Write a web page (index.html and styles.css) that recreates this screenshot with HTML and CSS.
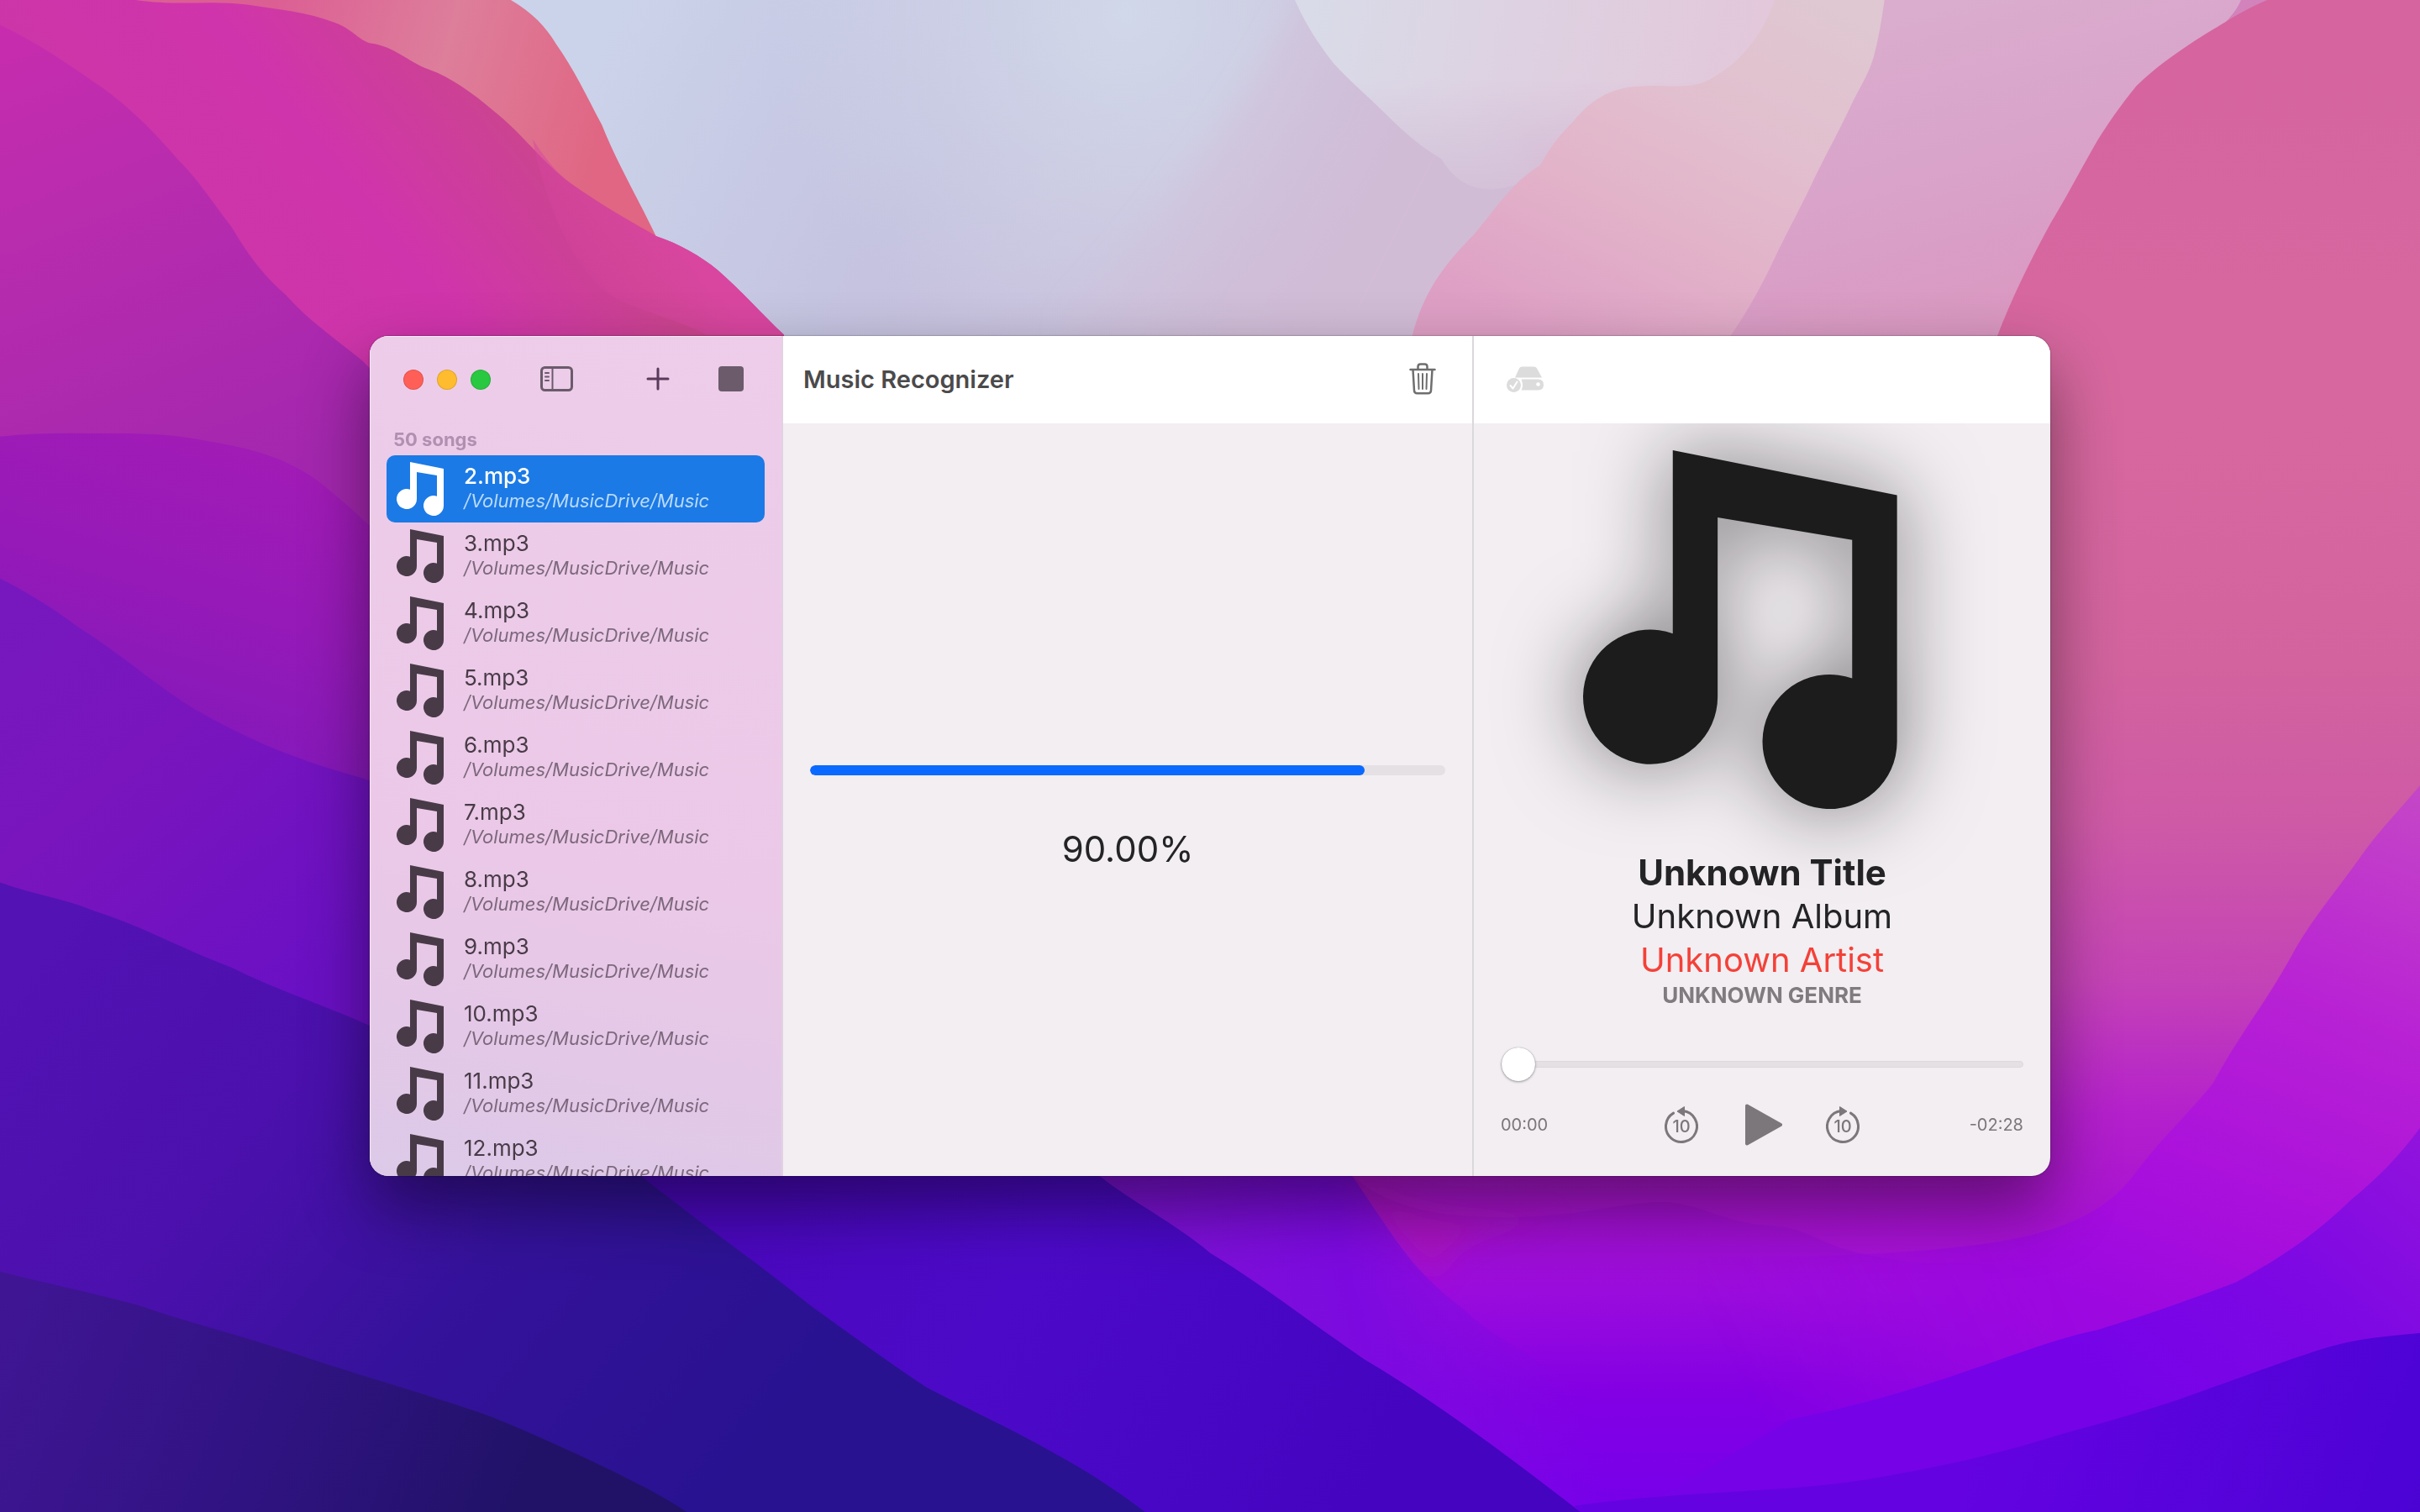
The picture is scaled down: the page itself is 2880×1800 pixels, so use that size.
FILE: index.html
```html
<!DOCTYPE html>
<html lang="en">
<head>
<meta charset="utf-8">
<title>Music Recognizer</title>
<link rel="stylesheet" href="styles.css">
</head>
<body>
<svg class="wallpaper" viewBox="0 0 1568 980" preserveAspectRatio="xMidYMid slice" aria-hidden="true">
  <defs>
    <linearGradient id="sky" gradientUnits="userSpaceOnUse" x1="400" y1="0" x2="900" y2="260"><stop offset="0" stop-color="#cbd3ea"/><stop offset=".4" stop-color="#c5c3e0"/><stop offset=".7" stop-color="#cbc0dc"/><stop offset="1" stop-color="#d0b4d2"/></linearGradient>
    <radialGradient id="skyglow" gradientUnits="userSpaceOnUse" cx="730" cy="10" r="230"><stop offset="0" stop-color="#d1d8e9"/><stop offset="1" stop-color="#d1d8e9" stop-opacity="0"/></radialGradient>
    <linearGradient id="blush" gradientUnits="userSpaceOnUse" x1="740" y1="60" x2="900" y2="140"><stop offset="0" stop-color="#d1bcd6" stop-opacity="0"/><stop offset="1" stop-color="#d1bcd6"/></linearGradient>
    <linearGradient id="pale" gradientUnits="userSpaceOnUse" x1="850" y1="0" x2="1130" y2="60"><stop offset="0" stop-color="#d9dbe8"/><stop offset=".5" stop-color="#ded1e1"/><stop offset="1" stop-color="#e2c8da"/></linearGradient>
    <linearGradient id="paleFade" gradientUnits="userSpaceOnUse" x1="0" y1="50" x2="0" y2="128"><stop offset="0" stop-color="#fff"/><stop offset="1" stop-color="#333"/></linearGradient>
    <mask id="paleMask"><rect width="1568" height="980" fill="url(#paleFade)"/></mask>
    <linearGradient id="peach" gradientUnits="userSpaceOnUse" x1="1180" y1="0" x2="1060" y2="250"><stop offset="0" stop-color="#dfc8d2"/><stop offset=".35" stop-color="#e2bfce"/><stop offset=".65" stop-color="#e2b2c9"/><stop offset="1" stop-color="#de9fc5"/></linearGradient>
    <linearGradient id="lilac" gradientUnits="userSpaceOnUse" x1="1230" y1="0" x2="1290" y2="220"><stop offset="0" stop-color="#daadce"/><stop offset=".5" stop-color="#d9a3ca"/><stop offset="1" stop-color="#da97c0"/></linearGradient>
    <linearGradient id="rose" gradientUnits="userSpaceOnUse" x1="0" y1="0" x2="0" y2="860"><stop offset="0" stop-color="#d5649f"/><stop offset=".3" stop-color="#d7689f"/><stop offset=".5" stop-color="#d2639e"/><stop offset=".62" stop-color="#ce5aa6"/><stop offset=".74" stop-color="#c443b6"/><stop offset=".84" stop-color="#b420cc"/><stop offset=".92" stop-color="#a812d2"/><stop offset="1" stop-color="#a010da"/></linearGradient>
    <linearGradient id="orchid" gradientUnits="userSpaceOnUse" x1="1568" y1="510" x2="1430" y2="870"><stop offset="0" stop-color="#c547c6"/><stop offset=".4" stop-color="#b822d4"/><stop offset=".75" stop-color="#aa10dc"/><stop offset="1" stop-color="#9c08e0"/></linearGradient>
    <linearGradient id="orchidFade" gradientUnits="userSpaceOnUse" x1="1130" y1="900" x2="1330" y2="800"><stop offset="0" stop-color="#000"/><stop offset="1" stop-color="#fff"/></linearGradient>
    <mask id="orchidMask"><rect width="1568" height="980" fill="url(#orchidFade)"/></mask>
    <linearGradient id="plum" gradientUnits="userSpaceOnUse" x1="0" y1="760" x2="0" y2="980"><stop offset="0" stop-color="#a512c8"/><stop offset=".35" stop-color="#9a0cdc"/><stop offset=".65" stop-color="#8300e4"/><stop offset="1" stop-color="#7600ea"/></linearGradient>
    <linearGradient id="plumSide" gradientUnits="userSpaceOnUse" x1="750" y1="860" x2="1000" y2="800"><stop offset="0" stop-color="#7d12d6"/><stop offset=".5" stop-color="#7c0ae0"/><stop offset="1" stop-color="#7c0ae0" stop-opacity="0"/></linearGradient>
    <linearGradient id="violetR" gradientUnits="userSpaceOnUse" x1="1568" y1="730" x2="1400" y2="930"><stop offset="0" stop-color="#9213dc"/><stop offset=".5" stop-color="#7d08e4"/><stop offset="1" stop-color="#7602e8"/></linearGradient>
    <linearGradient id="indigoR" gradientUnits="userSpaceOnUse" x1="1568" y1="980" x2="1300" y2="880"><stop offset="0" stop-color="#4b03d4"/><stop offset="1" stop-color="#6402e2"/></linearGradient>
    <linearGradient id="cobalt" gradientUnits="userSpaceOnUse" x1="500" y1="760" x2="880" y2="980"><stop offset="0" stop-color="#4a08be"/><stop offset=".4" stop-color="#4c0ac8"/><stop offset="1" stop-color="#4404c0"/></linearGradient>
    <linearGradient id="coral" gradientUnits="userSpaceOnUse" x1="180" y1="0" x2="400" y2="60"><stop offset="0" stop-color="#dc5f94"/><stop offset=".5" stop-color="#dd7e9b"/><stop offset="1" stop-color="#e06683"/></linearGradient>
    <linearGradient id="magenta" gradientUnits="userSpaceOnUse" x1="100" y1="240" x2="330" y2="60"><stop offset="0" stop-color="#ca36a6"/><stop offset=".6" stop-color="#d034ac"/><stop offset="1" stop-color="#cb458e"/></linearGradient>
    <linearGradient id="pinkTip" gradientUnits="userSpaceOnUse" x1="370" y1="200" x2="440" y2="150"><stop offset="0" stop-color="#d545a0" stop-opacity="0"/><stop offset="1" stop-color="#d946a0"/></linearGradient>
    <linearGradient id="fuchsia" gradientUnits="userSpaceOnUse" x1="0" y1="20" x2="120" y2="330"><stop offset="0" stop-color="#c72cae"/><stop offset=".4" stop-color="#b82cae"/><stop offset="1" stop-color="#a327ae"/></linearGradient>
    <linearGradient id="purple" gradientUnits="userSpaceOnUse" x1="150" y1="280" x2="90" y2="480"><stop offset="0" stop-color="#a21bb6"/><stop offset=".5" stop-color="#961ab8"/><stop offset="1" stop-color="#8418ba"/></linearGradient>
    <linearGradient id="grape" gradientUnits="userSpaceOnUse" x1="0" y1="400" x2="200" y2="640"><stop offset="0" stop-color="#7618be"/><stop offset=".4" stop-color="#7a15bd"/><stop offset="1" stop-color="#6a10c4"/></linearGradient>
    <linearGradient id="indigo" gradientUnits="userSpaceOnUse" x1="40" y1="600" x2="480" y2="960"><stop offset="0" stop-color="#5312b4"/><stop offset=".35" stop-color="#4a10ac"/><stop offset=".62" stop-color="#34129a"/><stop offset="1" stop-color="#281290"/></linearGradient>
    <linearGradient id="night" gradientUnits="userSpaceOnUse" x1="0" y1="840" x2="330" y2="980"><stop offset="0" stop-color="#401594"/><stop offset=".5" stop-color="#311384"/><stop offset="1" stop-color="#211268"/></linearGradient>
    <filter id="soft" x="-20%" y="-20%" width="140%" height="140%"><feGaussianBlur stdDeviation="8"/></filter>
  </defs>
  <rect width="1568" height="980" fill="url(#sky)"/>
  <rect width="1568" height="400" fill="url(#skyglow)"/>
  <path fill="url(#blush)" filter="url(#soft)" d="M850 -20C800 80 740 150 690 200L690 300H1000V120L900 -20Z"/>
  <path fill="url(#pale)" mask="url(#paleMask)" d="M839 0C846 16 854 28 864 41C876 54 888 64 899 75C912 88 922 96 934 103C944 120 960 128 984 119L1200 119V0Z"/>
  <path fill="url(#lilac)" d="M1200 0H1500L1330 300H1090Z"/>
  <path fill="url(#peach)" d="M915 218C922 190 935 172 955 152C970 134 980 118 998 107C1004 96 1010 88 1020 78C1030 66 1042 57 1062 56C1080 54 1096 60 1112 49C1130 38 1142 22 1150 0H1221C1219 14 1217 26 1214 37C1210 50 1204 58 1199 69C1190 88 1182 102 1174 119C1165 138 1157 152 1149 169C1140 188 1132 202 1121 218V300H890Z"/>
  <path fill="#cf74b4" opacity=".7" d="M1452 0C1446 16 1420 32 1402 50L1486 0Z"/>
  <path fill="url(#rose)" d="M1469 0C1450 8 1440 16 1429 22C1410 34 1396 44 1384 56C1374 68 1366 80 1359 91C1348 110 1340 126 1329 144C1316 168 1304 192 1294 218L1200 500L800 700V860H1568V0Z"/>
  <path fill="url(#plum)" d="M690 740V800L884 900L1010 980H1568V820H1300L1264 818C1240 820 1225 816 1204 812C1180 806 1168 796 1154 795C1146 794 1138 794 1129 792C1112 788 1096 780 1079 779C1055 779 1030 786 1009 787C985 790 965 789 949 788C915 786 890 775 876 762V740Z"/>
  <path fill="#b018b4" opacity=".55" filter="url(#soft)" d="M876 762C890 790 915 810 930 830C945 790 980 800 1010 787C990 790 965 789 949 788C920 786 890 775 876 762Z"/>
  <path fill="url(#plumSide)" d="M690 740H876V762L899 796C915 820 930 835 949 849C980 880 1040 890 1080 980H1010L884 900L690 800Z"/>
  <g mask="url(#orchidMask)"><path fill="url(#orchid)" d="M1568 509C1552 528 1540 540 1529 556C1512 580 1496 598 1484 621C1468 650 1450 672 1434 702C1418 722 1398 740 1380 765C1350 800 1300 815 1100 815V930C1290 900 1360 890 1400 860L1568 760Z"/></g>
  <path fill="url(#violetR)" d="M1568 731C1554 750 1540 764 1524 777C1500 800 1480 814 1449 831C1420 842 1392 852 1359 862C1310 872 1260 900 1160 920L1060 980H1568Z"/>
  <path fill="url(#indigoR)" d="M1568 864C1548 866 1530 867 1509 873C1480 882 1460 890 1434 899C1400 912 1370 920 1334 930C1290 944 1250 952 1209 959C1150 968 1090 966 1020 976L1024 980H1568Z"/>
  <path fill="url(#cobalt)" d="M400 700H620L712 762C735 780 760 792 784 812C820 834 850 858 884 881C930 908 980 946 1024 980H400Z"/>
  <path fill="url(#coral)" d="M80 0H331C345 8 354 18 360 28C372 45 380 62 390 81C400 106 412 126 425 153L400 220H80Z"/>
  <path fill="url(#magenta)" d="M0 0H88C115 4 135 0 160 3C180 6 200 8 215 14C228 18 232 26 240 28C256 30 264 40 278 45C292 50 306 60 320 72C340 88 350 104 370 119C388 132 406 142 425 153C440 158 454 166 465 175C480 188 494 204 508 217V400H0Z"/>
  <path fill="url(#pinkTip)" d="M345 90C355 105 360 111 370 119C388 132 406 142 425 153C440 158 454 166 465 175C480 188 494 204 508 217H458C440 208 420 203 400 194C375 180 355 140 345 90Z"/>
  <path fill="url(#fuchsia)" d="M0 16C25 28 45 42 65 56C85 70 100 86 115 103C130 118 138 132 150 147C160 164 170 178 185 191C200 208 218 220 235 234L300 300V420H0Z"/>
  <path fill="url(#purple)" d="M0 283C25 280 50 281 75 281C98 281 115 282 135 286C158 290 174 294 190 302C202 308 208 313 215 319C226 328 232 334 240 341L300 380V600H0Z"/>
  <path fill="url(#grape)" d="M0 375C18 384 34 394 50 406C76 422 98 442 125 459C148 472 168 482 190 490C208 497 224 501 240 506L340 560V760H0Z"/>
  <path fill="url(#indigo)" d="M0 572C22 580 40 582 60 590C92 600 120 616 150 627C180 642 212 652 240 665L415 762C450 790 490 818 525 846C550 864 574 882 600 899C628 914 656 926 685 943C706 954 726 968 742 980H0Z"/>
  <path fill="url(#night)" d="M0 824C30 832 60 838 90 846C124 858 158 866 190 877C228 890 264 900 300 912C326 920 350 932 375 943C398 954 424 966 445 980H0Z"/>
</svg>

<svg class="sprite" aria-hidden="true">
  <symbol id="note" viewBox="0 0 64 64"><path fill="currentColor" d="M16 0L56 8V52A12 12 0 1 1 48 40.700V16L24 12V44A12 12 0 1 1 16 32.700Z"/></symbol>
</svg>

<main class="window">
  <aside class="sidebar">
    <header class="toolbar sidebar-toolbar">
      <div class="lights">
        <button class="light close" aria-label="Close"></button>
        <button class="light minimize" aria-label="Minimize"></button>
        <button class="light zoom" aria-label="Zoom"></button>
      </div>
      <button class="tool raised toggle" aria-label="Toggle sidebar">
        <svg width="40" height="32" viewBox="0 0 40 32" fill="none" stroke="currentColor"><rect x="1.500" y="2.500" width="36" height="27" rx="4" stroke-width="3"/><path stroke-width="2" d="M14.500 3V29"/><path stroke-width="2" stroke-linecap="round" d="M6 9H10M6 13.500H10M6 18H10"/></svg>
      </button>
      <button class="tool raised add" aria-label="Add songs">
        <svg width="28" height="28" viewBox="0 0 28 28" stroke="currentColor" stroke-width="3" stroke-linecap="round"><path d="M14 2V26M2 14H26"/></svg>
      </button>
      <button class="tool raised" aria-label="Stop">
        <svg width="30" height="30" viewBox="0 0 30 30" fill="currentColor"><rect width="30" height="30" rx="4"/></svg>
      </button>
    </header>
    <h2 class="count">50 songs</h2>
    <ul class="songs">
      <li><button class="song selected"><svg class="song-icon"><use href="#note"/></svg><span class="song-text"><span class="name">2.mp3</span><span class="path">/Volumes/MusicDrive/Music</span></span></button></li>
      <li><button class="song"><svg class="song-icon"><use href="#note"/></svg><span class="song-text"><span class="name">3.mp3</span><span class="path">/Volumes/MusicDrive/Music</span></span></button></li>
      <li><button class="song"><svg class="song-icon"><use href="#note"/></svg><span class="song-text"><span class="name">4.mp3</span><span class="path">/Volumes/MusicDrive/Music</span></span></button></li>
      <li><button class="song"><svg class="song-icon"><use href="#note"/></svg><span class="song-text"><span class="name">5.mp3</span><span class="path">/Volumes/MusicDrive/Music</span></span></button></li>
      <li><button class="song"><svg class="song-icon"><use href="#note"/></svg><span class="song-text"><span class="name">6.mp3</span><span class="path">/Volumes/MusicDrive/Music</span></span></button></li>
      <li><button class="song"><svg class="song-icon"><use href="#note"/></svg><span class="song-text"><span class="name">7.mp3</span><span class="path">/Volumes/MusicDrive/Music</span></span></button></li>
      <li><button class="song"><svg class="song-icon"><use href="#note"/></svg><span class="song-text"><span class="name">8.mp3</span><span class="path">/Volumes/MusicDrive/Music</span></span></button></li>
      <li><button class="song"><svg class="song-icon"><use href="#note"/></svg><span class="song-text"><span class="name">9.mp3</span><span class="path">/Volumes/MusicDrive/Music</span></span></button></li>
      <li><button class="song"><svg class="song-icon"><use href="#note"/></svg><span class="song-text"><span class="name">10.mp3</span><span class="path">/Volumes/MusicDrive/Music</span></span></button></li>
      <li><button class="song"><svg class="song-icon"><use href="#note"/></svg><span class="song-text"><span class="name">11.mp3</span><span class="path">/Volumes/MusicDrive/Music</span></span></button></li>
      <li><button class="song"><svg class="song-icon"><use href="#note"/></svg><span class="song-text"><span class="name">12.mp3</span><span class="path">/Volumes/MusicDrive/Music</span></span></button></li>
    </ul>
  </aside>

  <section class="pane">
    <header class="toolbar main-toolbar">
      <h1 class="app-title">Music Recognizer</h1>
      <button class="tool raised trash" aria-label="Delete">
        <svg width="32" height="38" viewBox="0 0 32 38" fill="none" stroke="currentColor" stroke-linecap="round" stroke-linejoin="round"><path stroke-width="2.500" d="M1.500 8H30.500M10.500 8V4.500Q10.500 1.500 13.500 1.500H18.500Q21.500 1.500 21.500 4.500V8M4.500 8L6 33Q6.200 36.300 9.500 36.300H22.500Q25.800 36.300 26 33L27.500 8"/><path stroke-width="2" d="M11 13L11.500 31M16 13V31M21 13L20.500 31"/></svg>
      </button>
    </header>
    <div class="recognition">
      <progress class="bar" value="87.300" max="100" aria-labelledby="percent"></progress>
      <p class="percent" id="percent">90.00%</p>
    </div>
  </section>

  <section class="pane player-pane">
    <header class="toolbar player-toolbar">
      <button class="tool drive" aria-label="Save to drive" disabled>
        <svg width="44" height="32" viewBox="0 0 44 32"><path fill="currentColor" d="M15 2.500Q16 .500 18.500 .500H32.500Q35 .500 36 2.500L42 13.500H10ZM17.500 15.500H37.500Q44 15.500 44 22Q44 28.500 37.500 28.500H17.500Q19.500 25 19 21Q18.500 18 17.500 15.500Z"/><circle cx="37.500" cy="21.500" r="2.300" fill="#fff"/><circle cx="8.500" cy="22.500" r="8.500" fill="currentColor"/><path fill="none" stroke="#fff" stroke-width="2" stroke-linecap="round" stroke-linejoin="round" d="M4.500 23L7.500 26.500L12.500 18.500"/></svg>
      </button>
    </header>
    <div class="player">
      <svg class="artwork"><use href="#note"/></svg>
      <h2 class="track title">Unknown Title</h2>
      <p class="track">Unknown Album</p>
      <p class="track artist">Unknown Artist</p>
      <p class="genre">UNKNOWN GENRE</p>
      <input class="seek" type="range" min="0" max="148" value="0" aria-label="Playback position">
      <div class="transport">
        <span class="time">00:00</span>
        <div class="buttons">
          <button class="tool" aria-label="Back 10 seconds">
            <svg width="40" height="46" viewBox="0 0 40 46"><path fill="none" stroke="currentColor" stroke-width="3" stroke-linecap="round" d="M22 6.600A18.500 18.500 0 1 1 10.500 9.100"/><path fill="currentColor" d="M23.500 1.500V12.500L15 7Z" stroke="currentColor" stroke-linejoin="round"/><text x="20" y="32" text-anchor="middle" class="skip">10</text></svg>
          </button>
          <button class="tool" aria-label="Play">
            <svg width="48" height="52" viewBox="0 0 48 52"><path fill="currentColor" stroke="currentColor" stroke-width="4" stroke-linejoin="round" d="M6 3.500L46 26L6 48.500Z"/></svg>
          </button>
          <button class="tool" aria-label="Forward 10 seconds">
            <svg width="40" height="46" viewBox="0 0 40 46"><path fill="none" stroke="currentColor" stroke-width="3" stroke-linecap="round" d="M18 6.600A18.500 18.500 0 1 0 29.500 9.100"/><path fill="currentColor" d="M16.500 1.500V12.500L25 7Z" stroke="currentColor" stroke-linejoin="round"/><text x="20" y="32" text-anchor="middle" class="skip">10</text></svg>
          </button>
        </div>
        <span class="time remaining">-02:28</span>
      </div>
    </div>
  </section>
</main>
</body>
</html>
```
FILE: styles.css
```css
* {
  box-sizing: border-box;
}

body {
  margin: 0;
  min-height: 100vh;
  display: grid;
  place-items: center;
  overflow: hidden;
  background: #4a10ac;
  font-family: Inter, "Liberation Sans", sans-serif;
  color: #242326;
}

h1, h2, p, ul {
  margin: 0;
  padding: 0;
}

button {
  border: 0;
  padding: 0;
  background: none;
  font: inherit;
  color: inherit;
}

svg {
  display: block;
}

/* The wallpaper fills the screen behind the window. */
.wallpaper {
  position: fixed;
  inset: 0;
  width: 100%;
  height: 100%;
}

.sprite {
  position: absolute;
  width: 0;
  height: 0;
}

.window {
  position: relative;
  display: grid;
  grid-template-columns: 492px 1fr 688px;
  width: min(2000px, calc(100% - 96px));
  height: min(1000px, calc(100vh - 96px));
  border-radius: 22px;
  overflow: hidden;
  background: #f2eef2;
  box-shadow: 0 0 2px rgba(0, 0, 0, .6), 0 36px 80px rgba(0, 0, 0, .46);
}

.toolbar {
  display: flex;
  align-items: center;
  flex: none;
  height: 104px;
}

.tool {
  flex: none;
}

.raised {
  padding-bottom: 3px;
}

/* Sidebar */
.sidebar {
  display: flex;
  flex-direction: column;
  min-height: 0;
  border-right: 2px solid #e2d2e2;
  background: linear-gradient(10deg, #dcc9e8 0%, #e4c8e7 18%, #ebc8e7 38%, #edcdea 100%);
  box-shadow: inset 1px 1px 1px rgba(255, 255, 255, .6);
}

.sidebar-toolbar {
  padding: 0 45px 0 40px;
  color: #6b5b6b;
}

.lights {
  display: flex;
  gap: 16px;
}

.light {
  width: 24px;
  height: 24px;
  border-radius: 50%;
  border: 1px solid rgba(0, 0, 0, .12);
}

.close { background: #ff5f57; }
.minimize { background: #febc2e; }
.zoom { background: #28c840; }

.toggle {
  margin-left: 59px;
}

.add {
  margin: 0 58px 0 auto;
  color: #5a3a5a;
}

.count {
  padding: 0 28px;
  font-size: 22px;
  line-height: 38px;
  font-weight: 700;
  color: #b08fb0;
}

.songs {
  flex: 1;
  min-height: 0;
  overflow: hidden;
  padding: 0 20px;
  list-style: none;
}

.song {
  display: flex;
  gap: 16px;
  width: 100%;
  height: 80px;
  padding: 8px 12px;
  border-radius: 10px;
  text-align: left;
  color: #483b47;
}

.song-icon {
  flex: none;
  width: 64px;
  height: 64px;
}

.name, .path {
  display: block;
  white-space: nowrap;
}

.name {
  font-size: 26px;
  line-height: 34px;
}

.path {
  font-size: 22px;
  line-height: 24px;
  font-style: italic;
  color: #7c687c;
}

.selected {
  background: #1b7ae6;
  color: #fff;
}

.selected .name {
  font-weight: 500;
}

.selected .path {
  color: #bbdaf8;
}

/* Recognition pane */
.pane {
  display: flex;
  flex-direction: column;
  min-width: 0;
  min-height: 0;
}

.main-toolbar, .player-toolbar {
  background: #fff;
}

.main-toolbar {
  justify-content: space-between;
  padding: 0 43px 0 24px;
}

.app-title {
  font-size: 29px;
  line-height: 36px;
  font-weight: 600;
  color: #4b4a4b;
}

.trash {
  color: #6f6e6f;
}

.recognition {
  flex: 1;
  display: flex;
  flex-direction: column;
  align-items: center;
  justify-content: center;
  gap: 62px;
  padding: 44px 32px 0;
}

.bar {
  appearance: none;
  display: block;
  width: 100%;
  height: 12px;
  border: 0;
  border-radius: 6px;
  overflow: hidden;
  background: #e4e0e4;
}

.bar::-webkit-progress-bar {
  background: #e4e0e4;
}

.bar::-webkit-progress-value {
  border-radius: 6px;
  background: #0b69ff;
}

.percent {
  font-size: 42px;
  line-height: 52px;
}

/* Player pane */
.player-pane {
  border-left: 2px solid #dbd8db;
}

.player-toolbar {
  padding: 0 39px;
}

.drive {
  color: #dcdcdc;
}

.player {
  flex: 1;
  min-height: 0;
  display: flex;
  flex-direction: column;
  align-items: center;
  padding: 32px 32px 0;
  overflow: hidden;
}

.artwork {
  flex: none;
  width: 427px;
  height: 427px;
  margin-bottom: 50px;
  overflow: visible;
  color: #1c1c1c;
  filter: drop-shadow(0 0 50px rgba(0, 0, 0, .5));
}

.track {
  font-size: 40px;
  line-height: 52px;
}

.title {
  font-size: 42px;
  font-weight: 700;
}

.artist {
  color: #f44138;
}

.genre {
  font-size: 26px;
  line-height: 32px;
  font-weight: 700;
  color: #7f7b7f;
}

.seek {
  appearance: none;
  width: 100%;
  height: 40px;
  margin: 46px 0 26px;
  background: none;
}

.seek::-webkit-slider-runnable-track {
  height: 8px;
  border-radius: 4px;
  background: #e4e0e4;
  border: 1px solid #dcd8dc;
}

.seek::-webkit-slider-thumb {
  appearance: none;
  width: 40px;
  height: 40px;
  margin-top: -17px;
  border-radius: 50%;
  background: #fff;
  box-shadow: 0 0 1px rgba(0, 0, 0, .4), 0 1px 3px rgba(0, 0, 0, .35);
}

.transport {
  display: grid;
  grid-template-columns: 1fr auto 1fr;
  align-items: center;
  width: 100%;
  color: #7b777b;
}

.buttons {
  display: flex;
  align-items: center;
  gap: 52px;
}

.time {
  font-size: 20px;
  line-height: 24px;
}

.remaining {
  text-align: right;
}

.skip {
  font-size: 20px;
  font-weight: 500;
  fill: currentColor;
}
```
